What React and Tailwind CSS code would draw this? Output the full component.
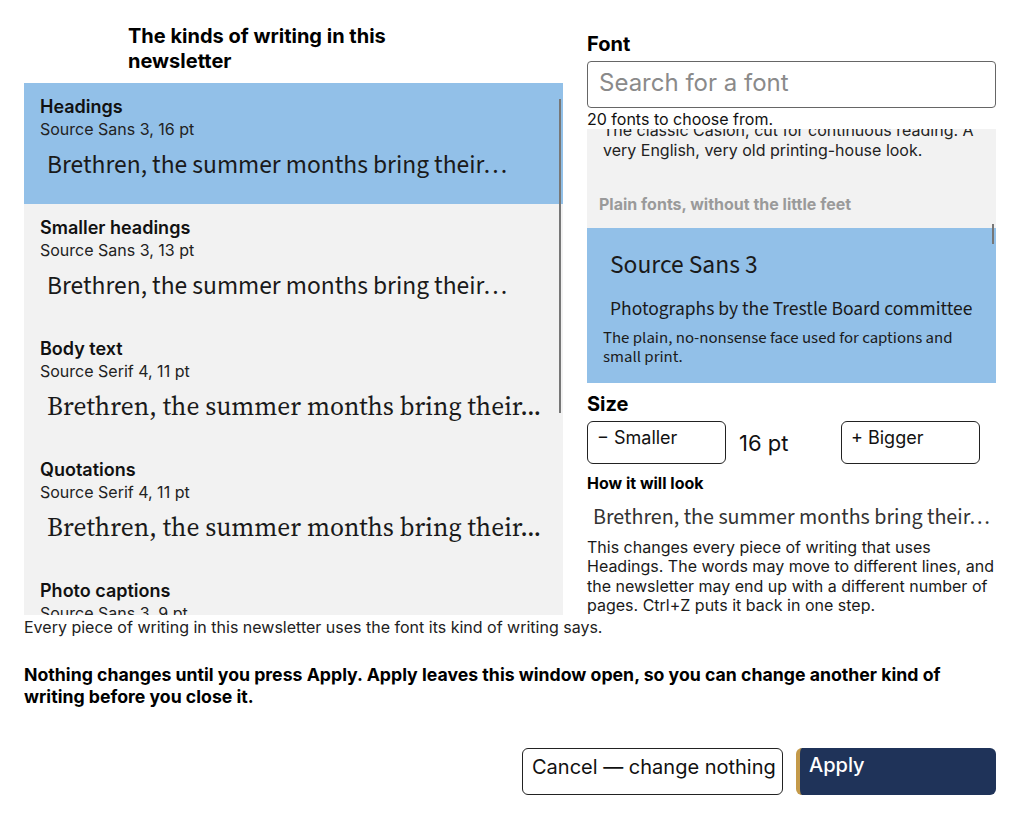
import React from "react";

const SANS = "font-['Source_Sans_3','Noto_Sans',sans-serif]";

const kinds = [
  { name: "Headings", font: "Source Sans 3, 16 pt", serif: false, selected: true },
  { name: "Smaller headings", font: "Source Sans 3, 13 pt", serif: false },
  { name: "Body text", font: "Source Serif 4, 11 pt", serif: true },
  { name: "Quotations", font: "Source Serif 4, 11 pt", serif: true },
  { name: "Photo captions", font: "Source Sans 3, 9 pt", serif: false },
];

function KindItem({ k }) {
  return (
    <div className={`h-[121px] shrink-0 px-4 pt-[13px] ${k.selected ? "bg-[#92c0e8]" : ""}`}>
      <div className="text-[18px] leading-[22px] font-semibold text-[#111]">{k.name}</div>
      <div className="text-[16px] leading-[23px] text-[#222]">{k.font}</div>
      {k.serif ? (
        <div className="mt-[9px] pl-[7px] whitespace-nowrap text-[25.5px] leading-[30px] text-[#1a1a1a] font-['Source_Serif_4','Noto_Serif','Liberation_Serif',serif]">
          Brethren, the summer months bring their...
        </div>
      ) : (
        <div className={`mt-[9px] pl-[7px] whitespace-nowrap text-[25.5px] leading-[30px] text-[#1a1a1a] ${SANS}`}>
          Brethren, the summer months bring their…
        </div>
      )}
    </div>
  );
}

export default function App() {
  return (
    <div className="w-[1020px] h-[820px] overflow-hidden bg-white text-[#111] font-['Inter','Liberation_Sans',sans-serif]">
      <div className="flex h-[617px] gap-6 px-6 pt-6">
        {/* Left column */}
        <div className="w-[539px] shrink-0 flex flex-col">
          <h2 className="shrink-0 pl-[104px] w-[410px] text-[20px] leading-[25px] font-bold text-black">
            The kinds of writing in this newsletter
          </h2>
          <div className="relative shrink-0 mt-[9px] h-[532px] overflow-hidden bg-[#f2f2f2] flex flex-col">
            {kinds.map((k) => (
              <KindItem key={k.name} k={k} />
            ))}
            <div className="absolute right-[2px] top-[16px] h-[314px] w-[2px] bg-[#777]" />
          </div>
        </div>

        {/* Right column */}
        <div className="w-[409px] shrink-0 flex flex-col pt-2">
          <div className="shrink-0 text-[20px] leading-[24px] font-bold text-black">Font</div>
          <div className="shrink-0 mt-[5px] h-[47px] rounded-[4px] border border-[#666] flex items-center px-[11px] pb-[3px]">
            <span className="text-[24px] text-[#8a8a8a]">Search for a font</span>
          </div>
          <div className="shrink-0 text-[16px] leading-[22px] text-[#111] relative z-10 -mb-[1px]">20 fonts to choose from.</div>
          <div className="relative shrink-0 h-[254px] overflow-hidden bg-[#f2f2f2]">
            <div className="-mt-[9px]">
              <div className="px-4 pb-[18px] text-[16px] leading-[20px] text-[#222]">
                The classic Caslon, cut for continuous reading. A very English, very old printing-house look.
              </div>
              <div className="px-3 pt-4 pb-[14px] text-[16px] leading-[20px] font-bold text-[#9a9a9a]">
                Plain fonts, without the little feet
              </div>
              <div className="bg-[#92c0e8] h-[155px] pl-4 pr-6 pt-[22px]">
                <div className={`pl-[7px] text-[25.5px] leading-[30px] text-[#1a1a1a] ${SANS}`}>Source Sans 3</div>
                <div className={`mt-[17px] pl-[7px] whitespace-nowrap text-[19.5px] leading-[24px] text-[#1a1a1a] ${SANS}`}>
                  Photographs by the Trestle Board committee
                </div>
                <div className={`mt-2 text-[16.8px] leading-[19px] text-[#1a1a1a] ${SANS}`}>
                  The plain, no-nonsense face used for captions and small print.
                </div>
              </div>
            </div>
            <div className="absolute right-[2px] top-[95px] h-[20px] w-[2px] bg-[#777]" />
          </div>

          <div className="shrink-0 mt-[9px] text-[20px] leading-[24px] font-bold text-black">Size</div>
          <div className="shrink-0 mt-[5px] flex items-center">
            <button className="h-[43px] w-[139px] rounded-[6px] border border-[#222] bg-white text-left pl-[9px] pt-[4px] flex items-start text-[18px] leading-[24px] text-[#111]">
              − Smaller
            </button>
            <span className="w-[115px] pl-[13px] text-[22px] leading-[28px] text-[#111]">16 pt</span>
            <button className="h-[43px] w-[139px] rounded-[6px] border border-[#222] bg-white text-left pl-[9px] pt-[4px] flex items-start text-[18px] leading-[24px] text-[#111]">
              + Bigger
            </button>
          </div>
          <div className="shrink-0 mt-[9px] text-[16px] leading-[20px] font-bold text-black">How it will look</div>
          <div className={`shrink-0 mt-[11px] pl-[6px] whitespace-nowrap text-[22px] leading-[26px] text-[#333] ${SANS}`}>
            Brethren, the summer months bring their…
          </div>
          <p className="shrink-0 mt-[8px] text-[16px] leading-[19.3px] text-[#1a1a1a]">
            This changes every piece of writing that uses Headings. The words may move to different lines, and the newsletter may end up with a different number of pages. Ctrl+Z puts it back in one step.
          </p>
        </div>
      </div>

      <div className="px-6">
        <p className="text-[16px] leading-[20px] text-[#222]">
          Every piece of writing in this newsletter uses the font its kind of writing says.
        </p>
        <p className="mt-[27px] w-[940px] text-[17.7px] leading-[22px] font-bold text-black">
          Nothing changes until you press Apply. Apply leaves this window open, so you can change another kind of writing before you close it.
        </p>
        <div className="mt-10 flex justify-end gap-[13px]">
          <button className="h-[47px] w-[261px] rounded-[6px] border border-[#222] bg-white flex items-start pl-[9px] pt-[4px] text-[20px] leading-[28px] text-[#111]">
            Cancel — change nothing
          </button>
          <button className="h-[47px] w-[200px] rounded-[6px] bg-[#1f3359] border-l-4 border-[#c49a4a] flex items-start pl-[9px] pt-[3px] text-[20px] leading-[28px] font-medium text-white">
            Apply
          </button>
        </div>
      </div>
    </div>
  );
}
